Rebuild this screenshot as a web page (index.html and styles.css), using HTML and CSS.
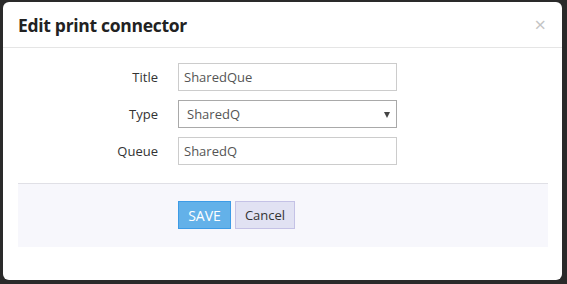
FILE: index.html
```html
<!DOCTYPE html>
<html lang="en">
<head>
<meta charset="utf-8">
<title>Edit print connector</title>
<link rel="stylesheet" href="styles.css">
</head>
<body>
<div class="modal">
  <div class="modal-header">
    <h4 class="modal-title">Edit print connector</h4>
    <span class="close">×</span>
  </div>
  <div class="modal-body">
    <form class="form">
      <label class="label" for="title">Title</label>
      <input class="control" id="title" type="text" value="SharedQue">
      <label class="label" for="type">Type</label>
      <div class="select-wrap">
        <select class="control select" id="type">
          <option>SharedQ</option>
        </select>
      </div>
      <label class="label" for="queue">Queue</label>
      <input class="control" id="queue" type="text" value="SharedQ">
    </form>
    <div class="footer">
      <button class="btn btn-save" type="button">SAVE</button>
      <button class="btn btn-cancel" type="button">Cancel</button>
    </div>
  </div>
</div>
</body>
</html>
```

FILE: styles.css
```css
html, body {
  margin: 0;
  padding: 0;
}
body {
  background: #2a2a2a;
  font-family: "Open Sans", "Noto Sans", "Liberation Sans", sans-serif;
  font-size: 13px;
  color: #333;
  width: 567px;
  height: 284px;
  overflow: hidden;
}
.modal {
  margin: 2px 0 0 3px;
  width: 559px;
  height: 278px;
  background: #fff;
  border-radius: 6px;
  box-sizing: border-box;
}
.modal-header {
  height: 46px;
  box-sizing: border-box;
  border-bottom: 1px solid #e5e5e5;
  display: flex;
  align-items: center;
  justify-content: space-between;
  padding: 0 15px 0 15px;
}
.modal-title {
  margin: 0;
  font-size: 17.5px;
  font-weight: 700;
  color: #222;
  letter-spacing: -0.3px;
}
.close {
  font-size: 20px;
  color: #c4c4c4;
  line-height: 1;
  margin-right: 1px;
}
.modal-body {
  padding: 15px 14px 0 15px;
}
.form {
  display: grid;
  grid-template-columns: 140px 219px;
  column-gap: 20px;
  row-gap: 9px;
  align-items: center;
  margin: 0;
}
.label {
  text-align: right;
  color: #333;
}
.control {
  box-sizing: border-box;
  height: 28px;
  width: 219px;
  border: 1px solid #ccc;
  padding: 0 5px;
  font-family: inherit;
  font-size: 13px;
  color: #555;
  background: #fff;
  margin: 0;
  outline: none;
}
.select-wrap {
  position: relative;
  width: 219px;
}
.select {
  appearance: none;
  -webkit-appearance: none;
  border-color: #a9a9a9;
  padding-left: 8px;
  border-radius: 0;
}
.select-wrap::after {
  content: "";
  position: absolute;
  right: 7px;
  top: 12px;
  border-left: 3.5px solid transparent;
  border-right: 3.5px solid transparent;
  border-top: 6px solid #444;
  pointer-events: none;
}
.footer {
  margin-top: 18px;
  border-top: 1px solid #e0e0e6;
  background: #f7f7fc;
  height: 64px;
  box-sizing: border-box;
  padding: 17px 0 0 160px;
  display: flex;
  align-items: flex-start;
  gap: 4px;
}
.btn {
  box-sizing: border-box;
  height: 28px;
  font-family: inherit;
  font-size: 13px;
  margin: 0;
  border-radius: 0;
  cursor: pointer;
}
.btn-save {
  width: 53px;
  background: #63b1e9;
  border: 1px solid #3d9be6;
  color: #fff;
  font-size: 14px;
  padding: 0;
}
.btn-cancel {
  width: 60px;
  background: #e1e2f3;
  border: 1px solid #c4c2e6;
  color: #333;
  padding: 0;
}
```
